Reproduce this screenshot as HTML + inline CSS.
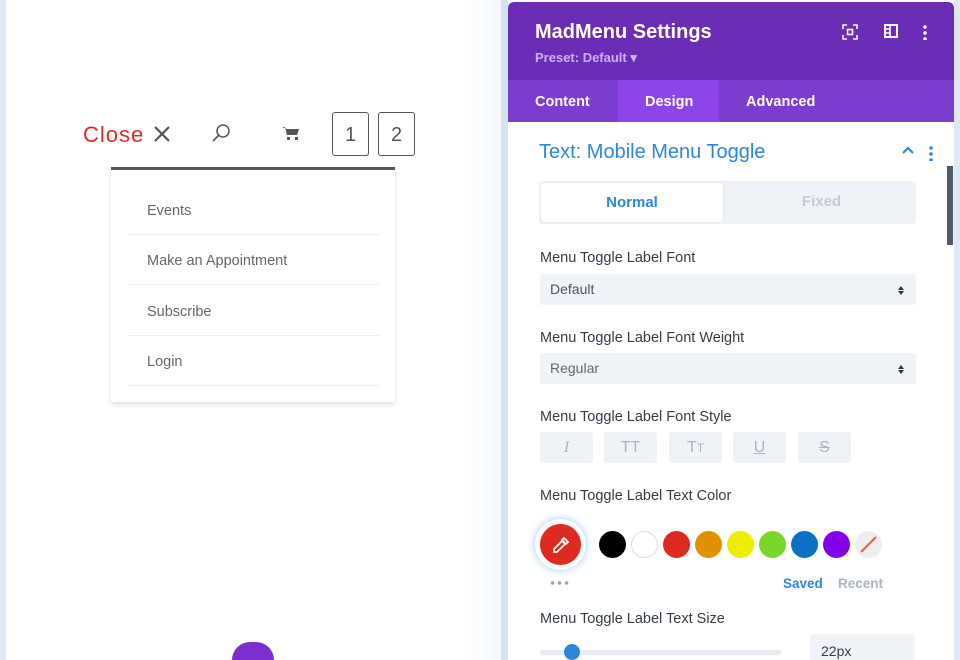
<!DOCTYPE html>
<html style="width:960px;height:660px;overflow:hidden"><head><style>
*{box-sizing:border-box;margin:0;padding:0}
body{width:960px;height:660px;overflow:hidden;background:#fff;font-family:"Liberation Sans",sans-serif;position:relative}
.abs{position:absolute}
.lbl{position:absolute;left:540px;font-size:14.5px;color:#333c46;}
.sel{position:absolute;left:540px;width:376px;height:31px;background:#f0f3f8;border-radius:3px;font-size:14px;color:#4a5566;padding:7px 10px}
.sel:after{content:"";position:absolute;right:12px;top:9px;border:3px solid transparent;border-bottom:4px solid #333;}
.sel:before{content:"";position:absolute;right:12px;top:17px;border:3px solid transparent;border-top:4px solid #333;}
.fs{position:absolute;top:432px;width:53px;height:31px;background:#eff2f7;border-radius:3px;color:#aab4c2;font-size:16px;text-align:center;line-height:31px}
.dot{position:absolute;top:531px;width:27px;height:27px;border-radius:50%}
.mi{position:absolute;left:128px;width:252px;height:50px;border-bottom:1px solid #eee;font-size:14.5px;color:#666;padding-left:19px;line-height:52px}
</style></head><body>
<div class="abs" style="left:0;top:0;width:6px;height:660px;background:#dde9f6"></div>
<div class="abs" style="left:460px;top:0;width:41px;height:660px;background:linear-gradient(90deg,#fff,#f5f8fc)"></div>
<div class="abs" style="left:501px;top:0;width:7px;height:660px;background:#d5e4f4"></div>
<div class="abs" style="left:954px;top:0;width:6px;height:660px;background:#dde9f6"></div>

<div class="abs" style="left:83px;top:122px;font-size:22px;color:#e02b20;letter-spacing:1px">Close</div>
<svg class="abs" style="left:152px;top:124px" width="20" height="20"><path d="M3 3L17 17M17 3L3 17" stroke="#555" stroke-width="2.2"/></svg>
<svg class="abs" style="left:210px;top:122px" width="22" height="22"><circle cx="13" cy="9" r="6" fill="none" stroke="#555" stroke-width="1.5"/><path d="M8.5 13.5L3 19" stroke="#555" stroke-width="1.6"/></svg>
<svg class="abs" style="left:281px;top:125px" width="20" height="18"><path d="M1 2h3l2 8h10l2-6H6" fill="#555"/><path d="M5 4h13l-2 6H6z" fill="#555"/><rect x="6" y="12" width="3" height="3" fill="#555"/><rect x="14" y="12" width="3" height="3" fill="#555"/></svg>
<div class="abs" style="left:332px;top:112px;width:37px;height:44px;border:1.5px solid #555;border-radius:3px;font-size:20px;color:#555;text-align:center;line-height:44px">1</div>
<div class="abs" style="left:378px;top:112px;width:37px;height:44px;border:1.5px solid #555;border-radius:3px;font-size:20px;color:#555;text-align:center;line-height:44px">2</div>

<div class="abs" style="left:111px;top:167px;width:284px;height:235px;background:#fff;border-top:3px solid #555;box-shadow:0 2px 5px rgba(0,0,0,.15)"></div>
<div class="mi" style="top:185px">Events</div>
<div class="mi" style="top:235px">Make an Appointment</div>
<div class="mi" style="top:286px">Subscribe</div>
<div class="mi" style="top:336px">Login</div>

<div class="abs" style="left:232px;top:642px;width:42px;height:18px;border-radius:21px 21px 0 0;background:#7b2fd0"></div>

<div class="abs" style="left:508px;top:2px;width:446px;height:78px;background:#6b2cb6;border-radius:6px 6px 0 0"></div>
<div class="abs" style="left:535px;top:21px;font-size:20px;font-weight:bold;color:#fff">MadMenu Settings</div>
<div class="abs" style="left:535px;top:50px;font-size:13px;font-weight:bold;color:#c9b3ea">Preset: Default ▾</div>
<svg class="abs" style="left:842px;top:24px" width="16" height="16"><path d="M1 5V1h4M11 1h4v4M15 11v4h-4M5 15H1v-4" fill="none" stroke="#fff" stroke-width="1.6"/><rect x="5.5" y="5.5" width="5" height="5" fill="none" stroke="#fff" stroke-width="1.6"/></svg>
<svg class="abs" style="left:884px;top:24px" width="14" height="14"><rect x="1" y="1" width="12" height="12" fill="none" stroke="#fff" stroke-width="2"/><path d="M6 1v12M1 5h5M1 9h5" stroke="#fff" stroke-width="1.6"/></svg>
<div class="abs" style="left:923px;top:24px;width:4px;height:16px;background:radial-gradient(circle,#fff 1.6px,transparent 2px) 0 0/4px 6px"></div>
<div class="abs" style="left:508px;top:80px;width:446px;height:42px;background:#7b3ccf"></div>
<div class="abs" style="left:618px;top:80px;width:101px;height:42px;background:#8c44e8"></div>
<div class="abs" style="left:535px;top:94px;font-size:14.5px;font-weight:bold;color:#fff">Content</div>
<div class="abs" style="left:645px;top:94px;font-size:14.5px;font-weight:bold;color:#fff">Design</div>
<div class="abs" style="left:746px;top:94px;font-size:14.5px;font-weight:bold;color:#fff">Advanced</div>

<div class="abs" style="left:539px;top:141px;font-size:20px;color:#2b87da">Text: Mobile Menu Toggle</div>
<svg class="abs" style="left:901px;top:145px" width="14" height="10"><path d="M2 8l5-5 5 5" fill="none" stroke="#2b87da" stroke-width="2.2"/></svg>
<div class="abs" style="left:929px;top:145px;width:4px;height:16px;background:radial-gradient(circle,#2b87da 1.6px,transparent 2px) 0 0/4px 6px"></div>
<div class="abs" style="left:947px;top:166px;width:6px;height:79px;background:#4f5a67"></div>

<div class="abs" style="left:539px;top:181px;width:377px;height:43px;background:#eff2f7;border-radius:4px"></div>
<div class="abs" style="left:540px;top:182px;width:184px;height:41px;background:#fff;border:1px solid #e6ebf2;border-radius:4px;text-align:center;line-height:39px;font-weight:bold;font-size:15px;color:#2b87da">Normal</div>
<div class="abs" style="left:727px;top:182px;width:189px;height:41px;text-align:center;line-height:39px;font-weight:bold;font-size:15px;color:#c3ccd7">Fixed</div>

<div class="lbl" style="top:250px">Menu Toggle Label Font</div>
<div class="sel" style="top:274px">Default</div>
<div class="lbl" style="top:330px">Menu Toggle Label Font Weight</div>
<div class="sel" style="top:353px;color:#666">Regular</div>
<div class="lbl" style="top:409px">Menu Toggle Label Font Style</div>
<div class="fs" style="left:540px;font-style:italic;font-family:'Liberation Serif',serif">I</div>
<div class="fs" style="left:604px">TT</div>
<div class="fs" style="left:669px">T<span style="font-size:12px">T</span></div>
<div class="fs" style="left:733px;text-decoration:underline">U</div>
<div class="fs" style="left:798px;text-decoration:line-through">S</div>
<div class="lbl" style="top:488px">Menu Toggle Label Text Color</div>

<div class="abs" style="left:535px;top:519px;width:51px;height:51px;border-radius:50%;background:#fff;box-shadow:0 0 8px rgba(43,135,218,.45)"></div>
<div class="abs" style="left:540px;top:524px;width:41px;height:41px;border-radius:50%;background:#de2a1f"></div>
<svg class="abs" style="left:551px;top:535px" width="20" height="20"><path d="M13 3l4 4-2 2-4-4zM11 6l3 3-8 8H3v-3z" fill="none" stroke="#fff" stroke-width="1.8"/></svg>
<div class="abs" style="left:549px;top:580px;width:20px;height:6px;background:radial-gradient(circle,#9aa5b3 1.6px,transparent 2px) 0 0/7px 6px"></div>
<div class="dot" style="left:599px;background:#000"></div>
<div class="dot" style="left:631px;background:#fff;box-shadow:inset 0 0 0 1px #ddd"></div>
<div class="dot" style="left:663px;background:#de2a1f"></div>
<div class="dot" style="left:695px;background:#e09000"></div>
<div class="dot" style="left:727px;background:#eded00"></div>
<div class="dot" style="left:759px;background:#7bd62a"></div>
<div class="dot" style="left:791px;background:#0c71c3"></div>
<div class="dot" style="left:823px;background:#8300e9"></div>
<div class="dot" style="left:855px;background:#eee"></div>
<svg class="abs" style="left:855px;top:531px" width="27" height="27"><path d="M6 21L21 6" stroke="#f55" stroke-width="2.2"/></svg>
<div class="abs" style="left:783px;top:576px;font-size:13.5px;font-weight:bold;color:#2b87da">Saved</div>
<div class="abs" style="left:838px;top:576px;font-size:13.5px;font-weight:bold;color:#a9b3c0">Recent</div>

<div class="lbl" style="top:611px">Menu Toggle Label Text Size</div>
<div class="abs" style="left:540px;top:650px;width:241px;height:5px;background:#e7ecf3;border-radius:3px"></div>
<div class="abs" style="left:564px;top:644px;width:16px;height:16px;border-radius:50%;background:#2b87da"></div>
<div class="abs" style="left:810px;top:634px;width:105px;height:26px;background:#f0f3f8;border-radius:3px 3px 0 0;font-size:14px;color:#333c46;padding:9px 11px">22px</div>
</body></html>
